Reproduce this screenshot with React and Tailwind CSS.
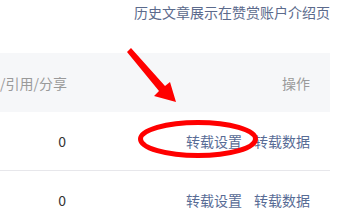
export default function App() {
  const rows = [{ count: 0 }, { count: 0 }];
  return (
    <div
      className="relative w-[350px] h-[208px] overflow-hidden bg-white"
      style={{ fontFamily: '"Noto Sans CJK SC", "Liberation Sans", sans-serif' }}
    >
      <div className="w-[330px]">
        {/* Top note */}
        <div className="flex justify-end pt-[2px] h-[53px]">
          <span className="text-[14px] leading-[20px] text-[#5b6a8c] whitespace-nowrap">
            历史文章展示在赞赏账户介绍页
          </span>
        </div>

        {/* Table header */}
        <div className="flex items-center h-[59px] bg-[#f6f7f9] text-[14px] leading-[20px] text-[#9a9a9a]">
          <div className="w-[66px] text-right whitespace-nowrap">/引用/分享</div>
          <div className="flex-1 flex justify-end pr-5">操作</div>
        </div>

        {/* Rows */}
        {rows.map((r, i) => (
          <div
            key={i}
            className="flex items-center h-[59px] border-b border-[#e7e7eb] text-[14px] leading-[20px]"
          >
            <div className="w-[66px] text-right text-[#353535]">{r.count}</div>
            <div className="flex-1 flex justify-end gap-3 pr-5 text-[#576b95] whitespace-nowrap">
              <a>转载设置</a>
              <a>转载数据</a>
            </div>
          </div>
        ))}
      </div>

      {/* Red annotation overlay */}
      <svg className="absolute left-0 top-0 pointer-events-none" width="350" height="208" viewBox="0 0 350 208">
        <polygon
          points="127,52 131,48 165,86 170,82 176,102 154,96 159,91"
          fill="#ff0000"
        />
        <ellipse cx="198" cy="139" rx="57.5" ry="16.5" fill="none" stroke="#ff0000" strokeWidth="5" />
      </svg>
    </div>
  );
}
